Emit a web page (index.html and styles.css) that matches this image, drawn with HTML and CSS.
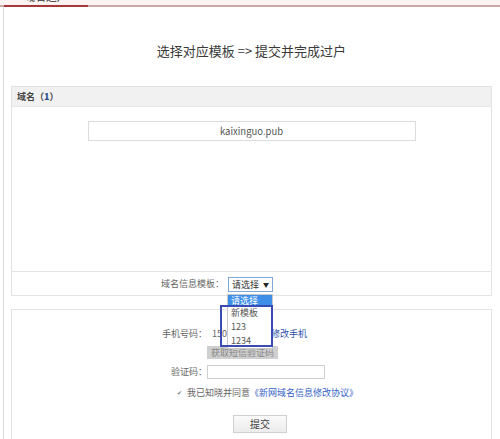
FILE: index.html
```html
<!DOCTYPE html>
<html lang="zh-CN">
<head>
<meta charset="utf-8">
<title>域名过户</title>
<link rel="stylesheet" href="styles.css">
</head>
<body>
<div class="topbar">
  <div class="tab"><span>域名过户</span></div>
</div>
<div class="main">
  <div class="title">选择对应模板 =&gt; 提交并完成过户</div>

  <div class="panel">
    <div class="panel-head">域名（<b class="count">1</b>）</div>
    <div class="panel-body">
      <div class="domain-box">kaixinguo.pub</div>
    </div>
    <div class="template-row">
      <span class="tpl-label">域名信息模板：</span>
      <div class="select-wrap">
        <div class="select"><span>请选择</span><span class="arrow">▼</span></div>
        <div class="dropdown">
          <div class="opt selected">请选择</div>
          <div class="opt">新模板</div>
          <div class="opt">123</div>
          <div class="opt">1234</div>
        </div>
        <div class="annot"></div>
      </div>
    </div>
  </div>

  <div class="panel panel-form">
    <div class="form-grid">
      <span class="lbl">手机号码：</span>
      <span class="val phone"><span class="num">150****8866</span><a class="link">修改手机</a></span>
      <span></span>
      <span class="val"><span class="sms-btn">获取短信验证码</span></span>
      <span class="lbl">验证码：</span>
      <span class="val"><span class="code-input"></span></span>
    </div>
    <div class="agree"><span class="chk">✔</span>我已知晓并同意<a class="link2">《新网域名信息修改协议》</a></div>
    <div class="submit-row"><span class="submit">提交</span></div>
  </div>
</div>
</body>
</html>
```

FILE: styles.css
```css
html, body {
  margin: 0;
  padding: 0;
  background: #fff;
}
body {
  width: 500px;
  height: 439px;
  overflow: hidden;
  font-family: "Noto Sans CJK SC", "Noto Sans", sans-serif;
  color: #555;
  font-size: 9px;
}
.topbar {
  height: 5px;
  background: #fdf3f3;
  border-bottom: 2px solid #c9a8a8;
  padding-left: 4px;
  display: flex;
}
.tab {
  width: 84px;
  height: 5px;
  border-bottom: 2px solid #a83838;
  overflow: hidden;
  text-align: center;
  font-size: 11px;
  color: #333;
}
.tab span {
  display: block;
  margin-top: -10px;
  line-height: 12px;
}
.main {
  margin-left: 3px;
  border-left: 1px solid #dedede;
  padding: 0 4px 0 7px;
  width: 481px;
  height: 432px;
}
.title {
  height: 79px;
  box-sizing: border-box;
  padding-top: 35px;
  line-height: 18px;
  font-size: 13px;
  color: #3a3a3a;
  text-align: center;
}
.panel {
  border: 1px solid #e3e3e3;
  background: #fff;
}
.panel-head {
  height: 19px;
  line-height: 19px;
  background: #f1f1f1;
  border-bottom: 1px solid #e6e6e6;
  padding-left: 5px;
  font-size: 9px;
  font-weight: 600;
  color: #444;
}
.count {
  color: #2b4f8f;
}
.panel-body {
  height: 164px;
  box-sizing: border-box;
  padding-top: 14px;
}
.domain-box {
  width: 328px;
  height: 20px;
  box-sizing: border-box;
  margin: 0 auto;
  border: 1px solid #dcdcdc;
  line-height: 18px;
  text-align: center;
  font-size: 9.5px;
  color: #555;
}
.template-row {
  height: 23px;
  border-top: 1px solid #e3e3e3;
  display: flex;
  align-items: flex-start;
  padding-left: 149px;
}
.tpl-label {
  width: 67px;
  margin-top: 6px;
  line-height: 12px;
  color: #666;
}
.select-wrap {
  position: relative;
  margin-top: 5px;
}
.select {
  width: 45px;
  height: 15px;
  box-sizing: border-box;
  border: 1px solid #7fa8d8;
  background: #fff;
  display: flex;
  align-items: center;
  justify-content: space-between;
  padding: 0 3px 0 3px;
  color: #333;
  font-size: 9px;
}
.arrow {
  font-size: 6px;
  color: #222;
}
.dropdown {
  position: absolute;
  left: -1px;
  top: 17px;
  width: 46px;
  background: #fff;
  border: 1px solid #c8c8c8;
  box-sizing: border-box;
  z-index: 2;
}
.opt {
  height: 14px;
  line-height: 14px;
  padding-left: 3px;
  color: #555;
  font-size: 9px;
}
.opt.selected {
  background: #3d8fe8;
  color: #fff;
  height: 11px;
  line-height: 11px;
}
.annot {
  position: absolute;
  left: -8px;
  top: 28px;
  width: 53px;
  height: 42px;
  box-sizing: border-box;
  border: 2px solid #3a4cb4;
  z-index: 3;
}
.panel-form {
  margin-top: 13px;
  height: 140px;
  padding-top: 18px;
  box-sizing: border-box;
}
.form-grid {
  display: grid;
  grid-template-columns: 195px 1fr;
  row-gap: 6px;
  align-items: center;
}
.lbl {
  text-align: right;
  color: #666;
  line-height: 12px;
}
.val {
  line-height: 12px;
  color: #666;
}
.phone {
  padding-left: 5px;
  display: flex;
}
.num {
  width: 59px;
  overflow: hidden;
  white-space: nowrap;
}
.link {
  color: #2c4fa8;
}
.sms-btn {
  display: inline-block;
  height: 13px;
  line-height: 13px;
  padding: 0 4px;
  background: #cfcfcf;
  color: #888;
}
.code-input {
  display: inline-block;
  width: 118px;
  height: 14px;
  box-sizing: border-box;
  border: 1px solid #cfcfcf;
  vertical-align: middle;
}
.agree {
  margin-top: 8px;
  padding-left: 165px;
  line-height: 12px;
  color: #666;
  display: flex;
  align-items: center;
}
.chk {
  display: inline-block;
  width: 7px;
  font-size: 6px;
  color: #777;
  margin-right: 3px;
}
.link2 {
  color: #3463c4;
}
.submit-row {
  margin-top: 16px;
  padding-left: 221px;
}
.submit {
  display: inline-block;
  width: 54px;
  height: 18px;
  box-sizing: border-box;
  border: 1px solid #cfcfcf;
  background: linear-gradient(#fafafa, #ececec);
  text-align: center;
  line-height: 16px;
  font-size: 10px;
  color: #444;
}
```
